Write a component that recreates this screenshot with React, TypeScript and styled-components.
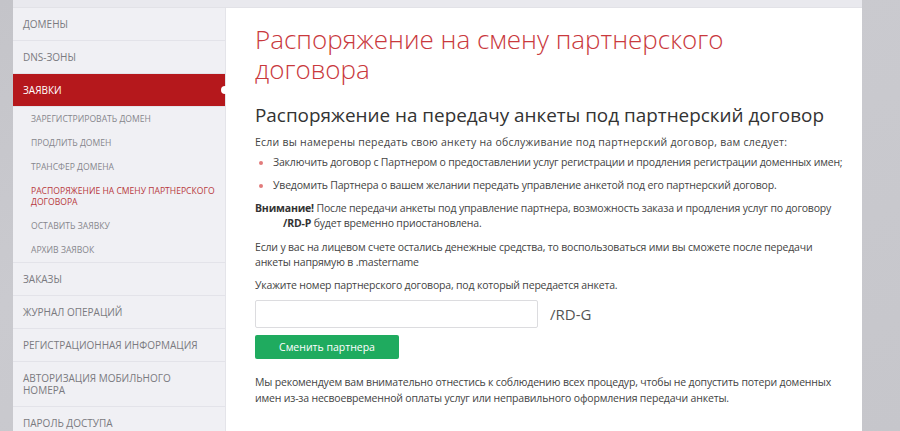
import React from "react";
import styled, { createGlobalStyle } from "styled-components";

const GlobalStyle = createGlobalStyle`
  html, body {
    margin: 0;
    padding: 0;
    background: #c8c8cd;
    font-family: "Open Sans", "Liberation Sans", sans-serif;
  }
  * {
    box-sizing: border-box;
  }
`;

const Page = styled.div`
  width: 900px;
  height: 431px;
  overflow: hidden;
  padding-left: 13px;
  padding-right: 38px;
  background: linear-gradient(160deg, #c4c4c9 0%, #cacacf 40%, #c6c6cb 100%);
`;

const Frame = styled.div`
  display: flex;
  flex-direction: column;
  height: 100%;
`;

const TopStrip = styled.div`
  height: 8px;
  flex-shrink: 0;
  background: #e9e9ee;
  border-bottom: 1px solid #e2e2e7;
`;

const Body = styled.div`
  flex: 1;
  display: flex;
  min-height: 0;
`;

const Sidebar = styled.nav`
  width: 213px;
  flex-shrink: 0;
  background: #f0f0f4;
  border-right: 1px solid #e4e4e9;
  display: flex;
  flex-direction: column;
`;

const NavItem = styled.div<{ active?: boolean }>`
  position: relative;
  padding: 10px 10px;
  font-size: 10px;
  line-height: 12px;
  text-transform: uppercase;
  color: ${({ active }) => (active ? "#fff" : "#7a7a80")};
  background: ${({ active }) => (active ? "#b5181c" : "transparent")};
  border-bottom: 1px solid #e3e3e9;
  flex-shrink: 0;
  ${({ active }) =>
    active
      ? `&::after { content: ''; position: absolute; right: -4px; top: 50%; width: 8px; height: 8px; margin-top: -4px; border-radius: 50%; background: #fff; }`
      : ""}
`;

const SubMenu = styled.div`
  display: flex;
  flex-direction: column;
  flex-shrink: 0;
  border-bottom: 1px solid #e3e3e9;
`;

const SubItem = styled.div<{ current?: boolean }>`
  padding: 6.5px 10px 6.5px 18px;
  font-size: 8.6px;
  line-height: 11px;
  text-transform: uppercase;
  color: ${({ current }) => (current ? "#b8393c" : "#86868c")};
`;

const Main = styled.main`
  flex: 1;
  background: #fff;
  padding: 16px 12px 0 29px;
  color: #444;
  font-size: 10.5px;
  line-height: 15px;
  letter-spacing: -0.18px;
  white-space: nowrap;
`;

const Title = styled.h1`
  margin: 0;
  font-size: 26px;
  line-height: 30px;
  font-weight: 300;
  letter-spacing: 0;
  color: #c9393d;
`;

const Subtitle = styled.h2`
  margin: 19px 0 0;
  font-size: 18.9px;
  line-height: 24px;
  font-weight: 400;
  letter-spacing: 0;
  color: #333;
`;

const Paragraph = styled.p<{ gap?: number; wide?: boolean }>`
  margin: ${({ gap }) => gap ?? 8}px 0 0;
  line-height: 15.5px;
  ${({ wide }) => (wide ? "letter-spacing: 0.25px;" : "")}
`;

const List = styled.ul`
  list-style: none;
  margin: 4px 0 0;
  padding: 0;
  display: flex;
  flex-direction: column;
  gap: 8px;
`;

const ListItem = styled.li`
  position: relative;
  padding-left: 18px;
  &::before {
    content: "";
    position: absolute;
    left: 4px;
    top: 6px;
    width: 4px;
    height: 4px;
    border-radius: 50%;
    background: #e27b7b;
  }
`;

const Contract = styled.span`
  display: inline-block;
  padding-left: 28px;
  font-weight: 700;
  color: #333;
`;

const Strong = styled.b`
  font-weight: 700;
  color: #333;
`;

const InputRow = styled.div`
  display: flex;
  align-items: center;
  gap: 12px;
  margin-top: 7px;
`;

const Input = styled.input`
  width: 283px;
  height: 28px;
  border: 1px solid #dcdcdf;
  border-radius: 2px;
  padding: 0 8px;
  font-family: inherit;
  font-size: 12px;
`;

const Suffix = styled.span`
  font-size: 15px;
  letter-spacing: 0;
  color: #555;
`;

const Button = styled.button`
  display: block;
  margin-top: 7px;
  width: 144px;
  height: 24px;
  border: none;
  border-radius: 2px;
  background: #1fab5f;
  color: #fff;
  font-family: inherit;
  font-size: 10.5px;
  cursor: pointer;
`;

const menuTop = ["Домены", "DNS-зоны"];
const subItems = [
  "Зарегистрировать домен",
  "Продлить домен",
  "Трансфер домена",
  "Распоряжение на смену партнерского договора",
  "Оставить заявку",
  "Архив заявок",
];
const menuBottom = [
  "Заказы",
  "Журнал операций",
  "Регистрационная информация",
  "Авторизация мобильного номера",
  "Пароль доступа",
];

const App = () => {
  return (
    <>
      <GlobalStyle />
      <Page>
        <Frame>
          <TopStrip />
          <Body>
            <Sidebar>
              {menuTop.map((item) => (
                <NavItem key={item}>{item}</NavItem>
              ))}
              <NavItem active>Заявки</NavItem>
              <SubMenu>
                {subItems.map((item, i) => (
                  <SubItem key={item} current={i === 3}>
                    {item}
                  </SubItem>
                ))}
              </SubMenu>
              {menuBottom.map((item) => (
                <NavItem key={item}>{item}</NavItem>
              ))}
            </Sidebar>
            <Main>
              <Title>
                Распоряжение на смену партнерского
                <br />
                договора
              </Title>
              <Subtitle>
                Распоряжение на передачу анкеты под партнерский договор
              </Subtitle>
              <Paragraph gap={8} wide>
                Если вы намерены передать свою анкету на обслуживание под
                партнерский договор, вам следует:
              </Paragraph>
              <List>
                <ListItem>
                  Заключить договор с Партнером о предоставлении услуг
                  регистрации и продления регистрации доменных имен;
                </ListItem>
                <ListItem>
                  Уведомить Партнера о вашем желании передать управление
                  анкетой под его партнерский договор.
                </ListItem>
              </List>
              <Paragraph gap={8}>
                <Strong>Внимание!</Strong> После передачи анкеты под
                управление партнера, возможность заказа и продления услуг по
                договору
                <br />
                <Contract>/RD-P</Contract> будет временно приостановлена.
              </Paragraph>
              <Paragraph gap={8}>
                Если у вас на лицевом счете остались денежные средства, то
                воспользоваться ими вы сможете после передачи
                <br />
                анкеты напрямую в .mastername
              </Paragraph>
              <Paragraph gap={7}>
                Укажите номер партнерского договора, под который передается
                анкета.
              </Paragraph>
              <InputRow>
                <Input type="text" />
                <Suffix>/RD-G</Suffix>
              </InputRow>
              <Button>Сменить партнера</Button>
              <Paragraph gap={16}>
                Мы рекомендуем вам внимательно отнестись к соблюдению всех
                процедур, чтобы не допустить потери доменных
                <br />
                имен из-за несвоевременной оплаты услуг или неправильного
                оформления передачи анкеты.
              </Paragraph>
            </Main>
          </Body>
        </Frame>
      </Page>
    </>
  );
};

export default App;
